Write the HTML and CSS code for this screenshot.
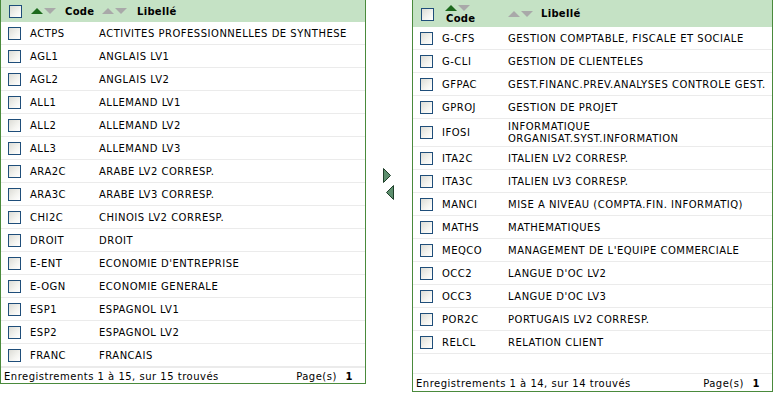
FILE: index.html
```html
<!DOCTYPE html>
<html>
<head>
<meta charset="utf-8">
<link rel="stylesheet" href="styles.css">
</head>
<body>
<div class="page">
  <div class="panel panel-left">
    <div class="head">
      <span class="cb cb-head"></span>
      <span class="sort sort-code"><span class="tri up on"></span><span class="tri down"></span></span>
      <span class="htext htext-code">Code</span>
      <span class="sort sort-lib"><span class="tri up"></span><span class="tri down"></span></span>
      <span class="htext htext-lib">Libellé</span>
    </div>
    <div class="rows">
      <div class="row"><span class="cb"></span><span class="code">ACTPS</span><span class="lib">ACTIVITES PROFESSIONNELLES DE SYNTHESE</span></div>
      <div class="row"><span class="cb"></span><span class="code">AGL1</span><span class="lib">ANGLAIS LV1</span></div>
      <div class="row"><span class="cb"></span><span class="code">AGL2</span><span class="lib">ANGLAIS LV2</span></div>
      <div class="row"><span class="cb"></span><span class="code">ALL1</span><span class="lib">ALLEMAND LV1</span></div>
      <div class="row"><span class="cb"></span><span class="code">ALL2</span><span class="lib">ALLEMAND LV2</span></div>
      <div class="row"><span class="cb"></span><span class="code">ALL3</span><span class="lib">ALLEMAND LV3</span></div>
      <div class="row"><span class="cb"></span><span class="code">ARA2C</span><span class="lib">ARABE LV2 CORRESP.</span></div>
      <div class="row"><span class="cb"></span><span class="code">ARA3C</span><span class="lib">ARABE LV3 CORRESP.</span></div>
      <div class="row"><span class="cb"></span><span class="code">CHI2C</span><span class="lib">CHINOIS LV2 CORRESP.</span></div>
      <div class="row"><span class="cb"></span><span class="code">DROIT</span><span class="lib">DROIT</span></div>
      <div class="row"><span class="cb"></span><span class="code">E-ENT</span><span class="lib">ECONOMIE D'ENTREPRISE</span></div>
      <div class="row"><span class="cb"></span><span class="code">E-OGN</span><span class="lib">ECONOMIE GENERALE</span></div>
      <div class="row"><span class="cb"></span><span class="code">ESP1</span><span class="lib">ESPAGNOL LV1</span></div>
      <div class="row"><span class="cb"></span><span class="code">ESP2</span><span class="lib">ESPAGNOL LV2</span></div>
      <div class="row"><span class="cb"></span><span class="code">FRANC</span><span class="lib">FRANCAIS</span></div>
    </div>
    <div class="foot"><span>Enregistrements 1 à 15, sur 15 trouvés</span><span class="pages">Page(s) <b>1</b></span></div>
  </div>

  <div class="mover">
    <svg class="arr arr-right" width="8" height="15" viewBox="0 0 8 15"><polygon points="0.5,0.5 7.5,7.5 0.5,14.5" fill="#5e8f6e" stroke="#1f3f2a" stroke-width="1"/></svg>
    <svg class="arr arr-left" width="8" height="15" viewBox="0 0 8 15"><polygon points="7.5,0.5 0.5,7.5 7.5,14.5" fill="#5e8f6e" stroke="#1f3f2a" stroke-width="1"/></svg>
  </div>

  <div class="panel panel-right">
    <div class="head head-tall">
      <span class="cb cb-head"></span>
      <span class="stack">
        <span class="sort"><span class="tri up on"></span><span class="tri down"></span></span>
        <span class="htext">Code</span>
      </span>
      <span class="sort sort-lib2"><span class="tri up"></span><span class="tri down"></span></span>
      <span class="htext">Libellé</span>
    </div>
    <div class="rows">
      <div class="row"><span class="cb"></span><span class="code">G-CFS</span><span class="lib">GESTION COMPTABLE, FISCALE ET SOCIALE</span></div>
      <div class="row"><span class="cb"></span><span class="code">G-CLI</span><span class="lib">GESTION DE CLIENTELES</span></div>
      <div class="row"><span class="cb"></span><span class="code">GFPAC</span><span class="lib">GEST.FINANC.PREV.ANALYSES CONTROLE GEST.</span></div>
      <div class="row"><span class="cb"></span><span class="code">GPROJ</span><span class="lib">GESTION DE PROJET</span></div>
      <div class="row row-two"><span class="cb"></span><span class="code">IFOSI</span><span class="lib">INFORMATIQUE<br>ORGANISAT.SYST.INFORMATION</span></div>
      <div class="row"><span class="cb"></span><span class="code">ITA2C</span><span class="lib">ITALIEN LV2 CORRESP.</span></div>
      <div class="row"><span class="cb"></span><span class="code">ITA3C</span><span class="lib">ITALIEN LV3 CORRESP.</span></div>
      <div class="row"><span class="cb"></span><span class="code">MANCI</span><span class="lib">MISE A NIVEAU (COMPTA.FIN. INFORMATIQ)</span></div>
      <div class="row"><span class="cb"></span><span class="code">MATHS</span><span class="lib">MATHEMATIQUES</span></div>
      <div class="row"><span class="cb"></span><span class="code">MEQCO</span><span class="lib">MANAGEMENT DE L'EQUIPE COMMERCIALE</span></div>
      <div class="row"><span class="cb"></span><span class="code">OCC2</span><span class="lib">LANGUE D'OC LV2</span></div>
      <div class="row"><span class="cb"></span><span class="code">OCC3</span><span class="lib">LANGUE D'OC LV3</span></div>
      <div class="row"><span class="cb"></span><span class="code">POR2C</span><span class="lib">PORTUGAIS LV2 CORRESP.</span></div>
      <div class="row row-last"><span class="cb"></span><span class="code">RELCL</span><span class="lib">RELATION CLIENT</span></div>
    </div>
    <div class="foot foot-right"><span>Enregistrements 1 à 14, sur 14 trouvés</span><span class="pages">Page(s) <b>1</b></span></div>
  </div>
</div>
</body>
</html>
```

FILE: styles.css
```css
html, body {
  margin: 0;
  padding: 0;
  background: #ffffff;
}
body {
  font-family: "DejaVu Sans", Verdana, sans-serif;
  font-size: 10px;
  letter-spacing: 0.5px;
  color: #000;
}
.page {
  display: flex;
  align-items: flex-start;
  width: 774px;
}
.panel {
  display: flex;
  flex-direction: column;
  border: 1px solid #4a8a3c;
  border-top: none;
  box-sizing: border-box;
  background: #fff;
}
.panel-left {
  width: 366px;
  height: 384px;
}
.panel-right {
  width: 361px;
  height: 392px;
}
.head {
  display: flex;
  align-items: center;
  height: 22px;
  background: #c5e2c5;
  flex: none;
  font-weight: bold;
  letter-spacing: 0.3px;
}
.head-tall {
  height: 27px;
}
.cb {
  display: inline-block;
  width: 11px;
  height: 11px;
  border: 1px solid #1f4e7a;
  background: linear-gradient(135deg, #dcdcd6 0%, #f4f4f0 60%, #ffffff 100%);
  flex: none;
}
.cb-head {
  margin-left: 8px;
  margin-top: 1px;
}
.sort {
  display: inline-flex;
  align-items: center;
  gap: 1px;
}
.sort-code {
  margin-left: 9px;
}
.tri {
  display: inline-block;
  width: 0;
  height: 0;
  border-left: 6px solid transparent;
  border-right: 6px solid transparent;
}
.tri.up {
  border-bottom: 6px solid #a9a9a9;
}
.tri.up.on {
  border-bottom-color: #1d6a1d;
}
.tri.down {
  border-top: 6px solid #a9a9a9;
}
.htext {
  margin-left: 8px;
}
.htext-code {
  margin-left: 9px;
  width: 36px;
}
.htext-lib {
  margin-left: 10px;
}
.sort-lib {
  margin-left: 1px;
}
.stack {
  display: flex;
  flex-direction: column;
  align-items: flex-start;
  margin-left: 10px;
  width: 64px;
}
.stack .sort {
  margin-left: 1px;
  margin-top: 1px;
}
.stack .htext {
  margin-left: 2px;
  margin-top: 2px;
}
.sort-lib2 {
  margin-left: 0;
}
.rows {
  flex: 1;
}
.row {
  display: flex;
  align-items: center;
  height: 23px;
  border-bottom: 1px solid #ebebeb;
  box-sizing: border-box;
}
.row-two {
  height: 28px;
  line-height: 12px;
}
.row .cb {
  margin-left: 7px;
  margin-right: 9px;
}
.panel-left .code {
  width: 69px;
}
.panel-right .code {
  width: 66px;
}
.foot {
  display: flex;
  justify-content: space-between;
  align-items: center;
  height: 17px;
  padding: 0 12px 0 3px;
  border-top: 1px solid #ebebeb;
  box-sizing: border-box;
  flex: none;
}
.foot-right {
  height: 18px;
  padding-top: 2px;
}
.pages b {
  margin-left: 5px;
}
.mover {
  width: 46px;
  display: flex;
  flex-direction: column;
  padding-top: 168px;
  flex: none;
}
.arr-right {
  margin-left: 17px;
}
.arr-left {
  margin-left: 20px;
  margin-top: 2px;
}
```
